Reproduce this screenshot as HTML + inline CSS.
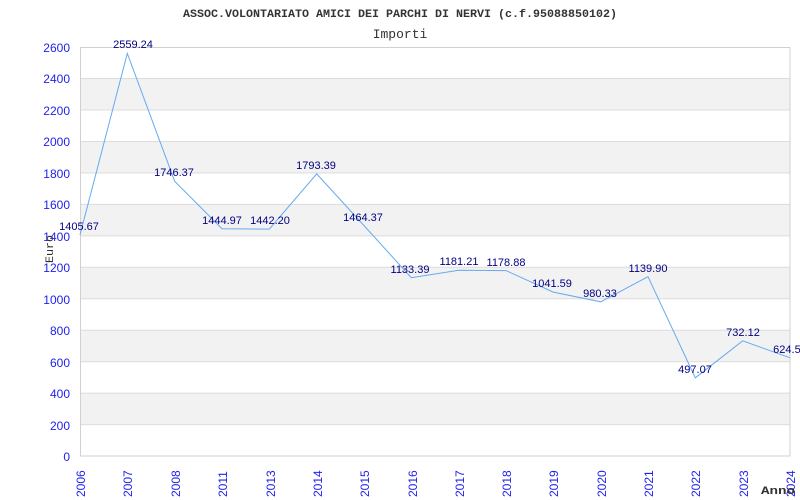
<!DOCTYPE html>
<html><head><meta charset="utf-8"><style>
html,body{margin:0;padding:0;background:#fff;}
svg{display:block}
</style></head><body>
<svg width="800" height="500" xmlns="http://www.w3.org/2000/svg">
<rect width="800" height="500" fill="#fff"/>
<text x="183" y="17" textLength="434" lengthAdjust="spacingAndGlyphs" font-family="Liberation Mono, monospace" font-size="11" font-weight="bold" fill="#333">ASSOC.VOLONTARIATO AMICI DEI PARCHI DI NERVI (c.f.95088850102)</text>
<text x="400" y="38" text-anchor="middle" font-family="Liberation Mono, monospace" font-size="13" fill="#333">Importi</text>
<g fill="#f2f2f2">
<rect x="80" y="78.5" width="710" height="31.5"/>
<rect x="80" y="141.5" width="710" height="31.5"/>
<rect x="80" y="204.4" width="710" height="31.5"/>
<rect x="80" y="267.3" width="710" height="31.5"/>
<rect x="80" y="330.2" width="710" height="31.5"/>
<rect x="80" y="393.1" width="710" height="31.5"/>
</g>
<g stroke="#dcdcdc" stroke-width="1">
<line x1="80" x2="790" y1="78.5" y2="78.5"/><line x1="80" x2="790" y1="110" y2="110"/>
<line x1="80" x2="790" y1="141.5" y2="141.5"/><line x1="80" x2="790" y1="173" y2="173"/>
<line x1="80" x2="790" y1="204.4" y2="204.4"/><line x1="80" x2="790" y1="235.9" y2="235.9"/>
<line x1="80" x2="790" y1="267.3" y2="267.3"/><line x1="80" x2="790" y1="298.8" y2="298.8"/>
<line x1="80" x2="790" y1="330.2" y2="330.2"/><line x1="80" x2="790" y1="361.7" y2="361.7"/>
<line x1="80" x2="790" y1="393.1" y2="393.1"/><line x1="80" x2="790" y1="424.6" y2="424.6"/>
</g>
<rect x="80.5" y="47.5" width="709.5" height="408.5" fill="none" stroke="#d0d0d0"/>
<g font-family="Liberation Sans, sans-serif" font-size="12" fill="#2222ee" text-anchor="end">
<text x="70" y="52">2600</text><text x="70" y="83">2400</text><text x="70" y="115">2200</text>
<text x="70" y="146">2000</text><text x="70" y="178">1800</text><text x="70" y="209">1600</text>
<text x="70" y="241">1400</text><text x="70" y="272">1200</text><text x="70" y="304">1000</text>
<text x="70" y="335">800</text><text x="70" y="367">600</text><text x="70" y="398">400</text>
<text x="70" y="430">200</text><text x="70" y="461">0</text>
</g>
<g font-family="Liberation Sans, sans-serif" font-size="12" fill="#2222ee">
<text transform="translate(85,497) rotate(-90)">2006</text>
<text transform="translate(132,497) rotate(-90)">2007</text>
<text transform="translate(180,497) rotate(-90)">2008</text>
<text transform="translate(227,497) rotate(-90)">2011</text>
<text transform="translate(275,497) rotate(-90)">2013</text>
<text transform="translate(322,497) rotate(-90)">2014</text>
<text transform="translate(369,497) rotate(-90)">2015</text>
<text transform="translate(417,497) rotate(-90)">2016</text>
<text transform="translate(464,497) rotate(-90)">2017</text>
<text transform="translate(511,497) rotate(-90)">2018</text>
<text transform="translate(558,497) rotate(-90)">2019</text>
<text transform="translate(606,497) rotate(-90)">2020</text>
<text transform="translate(653,497) rotate(-90)">2021</text>
<text transform="translate(700,497) rotate(-90)">2022</text>
<text transform="translate(748,497) rotate(-90)">2023</text>
<text transform="translate(795,497) rotate(-90)">2024</text>
</g>
<text transform="translate(53,263) rotate(-90)" textLength="28" lengthAdjust="spacingAndGlyphs" font-family="Liberation Mono, monospace" font-size="11" fill="#333">Euro</text>
<text x="761" y="494" textLength="34" lengthAdjust="spacingAndGlyphs" font-family="Liberation Mono, monospace" font-size="11" font-weight="bold" fill="#333">Anno</text>
<polyline fill="none" stroke="#66aaee" stroke-width="1" points="80,234.9 127.3,53.4 174.7,181.3 222,228.7 269.3,229.1 316.7,173.9 364,225.6 411.3,277.7 458.7,270.2 506,270.6 553.3,292.1 600.7,301.8 648,276.7 695.3,377.8 742.7,340.8 790,357.8"/>
<g font-family="Liberation Sans, sans-serif" font-size="11" fill="#000080" text-anchor="middle">
<text x="79" y="230">1405.67</text>
<text x="133" y="48">2559.24</text>
<text x="174" y="176">1746.37</text>
<text x="222" y="224">1444.97</text>
<text x="270" y="224">1442.20</text>
<text x="316" y="169">1793.39</text>
<text x="363" y="221">1464.37</text>
<text x="410" y="273">1133.39</text>
<text x="459" y="265">1181.21</text>
<text x="506" y="266">1178.88</text>
<text x="552" y="287">1041.59</text>
<text x="600" y="297">980.33</text>
<text x="648" y="272">1139.90</text>
<text x="695" y="373">497.07</text>
<text x="743" y="336">732.12</text>
<text x="790" y="353">624.50</text>
</g>
</svg>
</body></html>
